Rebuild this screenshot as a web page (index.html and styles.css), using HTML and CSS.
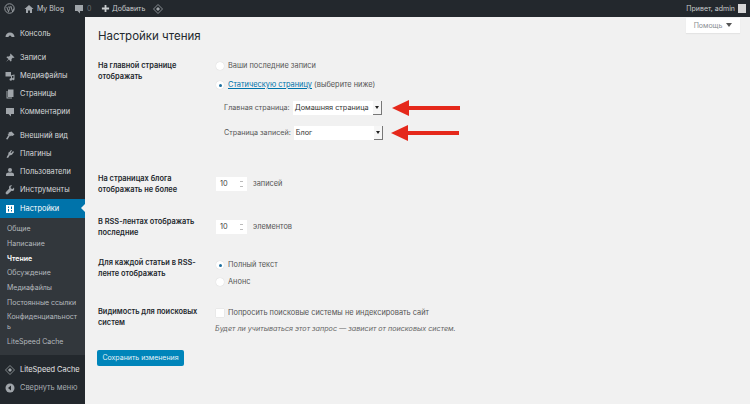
FILE: index.html
```html
<!DOCTYPE html>
<html lang="ru">
<head>
<meta charset="utf-8">
<title>Настройки чтения</title>
<link rel="stylesheet" href="styles.css">
</head>
<body>
<header class="topbar">
  <div class="bar-left">
    <svg class="ic wp" viewBox="0 0 20 20"><circle cx="10" cy="10" r="8.600" fill="none" stroke="#a0a5aa" stroke-width="1.600"/><path d="M5 7l3.200 9 2-6-1.200-3h-1m2 0h4m-1.200 0l2.800 9 2-6" fill="none" stroke="#a0a5aa" stroke-width="1.500"/></svg>
    <svg class="ic home" viewBox="0 0 20 20"><path d="M10 2L1 10h3v8h4v-5h4v5h4v-8h3z" fill="#a0a5aa"/></svg>
    <span class="bar-text blog">My Blog</span>
    <svg class="ic bubble" viewBox="0 0 20 20"><path d="M2 2h16v12h-6v5l-5-5H2z" fill="#a0a5aa"/></svg>
    <span class="bar-text zero">0</span>
    <svg class="ic plus" viewBox="0 0 20 20"><path d="M8 2h4v6h6v4h-6v6H8v-6H2V8h6z" fill="#c9ccce"/></svg>
    <span class="bar-text">Добавить</span>
    <svg class="ic ls" viewBox="0 0 20 20"><path d="M10 1l9 9-9 9-9-9z" fill="none" stroke="#a0a5aa" stroke-width="1.600"/><path d="M10 6l4 4-4 4-4-4z" fill="#a0a5aa"/></svg>
  </div>
  <div class="bar-right">
    <span class="bar-text">Привет, admin</span>
    <span class="avatar"></span>
  </div>
</header>
<div class="layout">
  <nav class="sidebar">
    <ul class="menu">
      <li class="item"><svg class="mi" viewBox="0 0 20 20"><path d="M1 16a9 9 0 1 1 18 0h-6a3 3 0 0 0-6 0z" fill="#a0a5aa"/></svg>Консоль</li>
      <li class="item sep"><svg class="mi" viewBox="0 0 20 20"><path d="M11 1l8 8-2 1-1-1-3 3 0 4-2 1-3-4-6 5 5-6-4-3 1-2h4l3-3-1-1z" fill="#a0a5aa"/></svg>Записи</li>
      <li class="item"><svg class="mi" viewBox="0 0 20 20"><path d="M1 2h11v9H1z" fill="#a0a5aa"/><path d="M14 8l5-1v9a2.500 2.500 0 1 1-2-2.400V9.500l-3 .6V17a2.500 2.500 0 1 1-2-2.400V9z" fill="#a0a5aa"/></svg>Медиафайлы</li>
      <li class="item"><svg class="mi" viewBox="0 0 20 20"><path d="M6 1h11v15H6z" fill="#a0a5aa"/><path d="M3 4h2v13h9v2H3z" fill="#a0a5aa"/></svg>Страницы</li>
      <li class="item"><svg class="mi" viewBox="0 0 20 20"><path d="M2 2h16v12h-6v5l-5-5H2z" fill="#a0a5aa"/></svg>Комментарии</li>
      <li class="item sep"><svg class="mi" viewBox="0 0 20 20"><path d="M13 1l6 6-4 3-2-1-1 2-2-2-5 8-3-1 5-8-2-2 3-1-1-2z" fill="#a0a5aa"/></svg>Внешний вид</li>
      <li class="item"><svg class="mi" viewBox="0 0 20 20"><path d="M12 2l2 1-3 4 2 1 3-4 2 2-3 4c-1 2-3 3-5 2l-4 6-3-1 4-7C6 8 7 6 9 6z" fill="#a0a5aa"/></svg>Плагины</li>
      <li class="item"><svg class="mi" viewBox="0 0 20 20"><circle cx="10" cy="6" r="4" fill="#a0a5aa"/><path d="M2 18v-3c0-3 3-4 8-4s8 1 8 4v3z" fill="#a0a5aa"/></svg>Пользователи</li>
      <li class="item"><svg class="mi" viewBox="0 0 20 20"><path d="M18 5l-3 3-3-1-1-3 3-3c-3-1-6 1-6 4l.5 2L2 14c-1 1-1 3 0 4s3 1 4 0l7-6.500 2 .5c3 0 4-3 3-7z" fill="#a0a5aa"/></svg>Инструменты</li>
      <li class="item current"><svg class="mi" viewBox="0 0 20 20"><path d="M2 2h16v16H2z" fill="#fff"/><path d="M6 5h2v3H6zm0 5h2v5H6zm6-5h2v5h-2zm0 7h2v3h-2z" fill="#0073aa"/></svg>Настройки</li>
      <li class="submenu">
        <a class="sub">Общие</a>
        <a class="sub">Написание</a>
        <a class="sub active">Чтение</a>
        <a class="sub">Обсуждение</a>
        <a class="sub">Медиафайлы</a>
        <a class="sub">Постоянные ссылки</a>
        <a class="sub">Конфиденциальност<br>ь</a>
        <a class="sub">LiteSpeed Cache</a>
      </li>
      <li class="item lsitem"><svg class="mi" viewBox="0 0 20 20"><path d="M10 1l9 9-9 9-9-9z" fill="none" stroke="#a0a5aa" stroke-width="1.500"/><path d="M10 6l4 4-4 4-4-4z" fill="#a0a5aa"/></svg>LiteSpeed Cache</li>
      <li class="item collapse"><svg class="mi" viewBox="0 0 20 20"><circle cx="10" cy="10" r="9" fill="#a0a5aa"/><path d="M12 5v10l-6-5z" fill="#23282d"/></svg>Свернуть меню</li>
    </ul>
  </nav>
  <main class="content">
    <div class="help-wrap"><button class="help">Помощь <span class="caret"></span></button></div>
    <h1 class="title">Настройки чтения</h1>
    <section class="row row-front">
      <div class="label">На главной странице отображать</div>
      <div class="field">
        <label class="line"><span class="radio"></span>Ваши последние записи</label>
        <label class="line"><span class="radio on"></span><span><a class="link">Статическую страницу</a> (выберите ниже)</span></label>
        <div class="pick pick-a">
          <span class="pick-label">Главная страница:</span>
          <span class="select"><span class="select-text">Домашняя страница</span><span class="select-btn"></span></span>
          <svg class="arrow" viewBox="0 0 68 16"><path d="M0 8L17 0v6h51v4H17V16z" fill="#e5281b"/></svg>
        </div>
        <div class="pick pick-b">
          <span class="pick-label">Страница записей:</span>
          <span class="select"><span class="select-text">Блог</span><span class="select-btn"></span></span>
          <svg class="arrow" viewBox="0 0 68 16"><path d="M0 8L17 0v6h51v4H17V16z" fill="#e5281b"/></svg>
        </div>
      </div>
    </section>
    <section class="row row-posts">
      <div class="label">На страницах блога отображать не более</div>
      <div class="field inline">
        <span class="number">10<span class="spin"></span></span>записей
      </div>
    </section>
    <section class="row row-rss">
      <div class="label">В RSS-лентах отображать последние</div>
      <div class="field inline">
        <span class="number">10<span class="spin"></span></span>элементов
      </div>
    </section>
    <section class="row row-each">
      <div class="label">Для каждой статьи в RSS-ленте отображать</div>
      <div class="field">
        <label class="line"><span class="radio on"></span>Полный текст</label>
        <label class="line"><span class="radio"></span>Анонс</label>
      </div>
    </section>
    <section class="row row-vis">
      <div class="label">Видимость для поисковых систем</div>
      <div class="field">
        <label class="line"><span class="check"></span>Попросить поисковые системы не индексировать сайт</label>
        <p class="desc">Будет ли учитываться этот запрос — зависит от поисковых систем.</p>
      </div>
    </section>
    <button class="save">Сохранить изменения</button>
  </main>
</div>
</body>
</html>
```
FILE: styles.css
```css
* { box-sizing: border-box; }
html, body { margin: 0; padding: 0; height: 100%; overflow: hidden; }
body { width: 750px; height: 404px; background: #f1f1f1; color: #444; font-family: Inter, "Liberation Sans", sans-serif; font-size: 7.400px; line-height: 10px; }
ul { list-style: none; margin: 0; padding: 0; }

.topbar { height: 17px; background: #23282d; color: #c5c8cb; display: flex; justify-content: space-between; align-items: center; }
.bar-left { display: flex; align-items: center; padding-left: 4px; }
.bar-right { display: flex; align-items: center; padding-right: 4px; }
.bar-text { font-size: 7px; color: #c9ccce; white-space: nowrap; }
.ic { width: 10px; height: 10px; flex: none; }
.wp { width: 11px; height: 11px; }
.home { margin-left: 9px; margin-right: 3px; }
.bubble { margin-left: 10px; margin-right: 3px; }
.zero { color: #6b7074; }
.plus { margin-left: 9.500px; margin-right: 2px; width: 9px; height: 9px; }
.ls { margin-left: 8px; }
.avatar { width: 8px; height: 9px; margin-left: 3px; background: #d5d5d5; }

.layout { display: flex; height: 387px; }
.sidebar { width: 85px; flex: none; background: #23282d; }
.menu { padding-top: 8px; }
.item { height: 18px; display: flex; align-items: center; padding-left: 5px; color: #d6d8da; font-size: 7.400px; white-space: nowrap; }
.mi { width: 10px; height: 10px; margin-right: 5px; flex: none; }
.sep { margin-top: 6px; }
.current { background: #0073aa; color: #fff; height: 19px; position: relative; }
.current::after { content: ""; position: absolute; right: 0; top: 5px; border: 4.500px solid transparent; border-right-color: #f1f1f1; border-left-width: 0; }
.submenu { background: #32373c; padding: 4px 0 5px; }
.sub { display: block; padding: 2.350px 6px 2.350px 7px; color: #b4b9be; font-size: 7px; line-height: 10px; white-space: nowrap; }
.active { color: #fff; font-weight: 600; }
.lsitem { margin-top: 6px; color: #e6e7e8; }
.collapse { color: #a9aeb3; }

.content { flex: 1; position: relative; padding: 12px 0 0 13px; }
.help-wrap { position: absolute; top: 1px; right: 10px; }
.help { display: block; width: 54px; height: 15px; border: 0; padding: 0; background: #fff; color: #8a8e92; font: 7px/15px Inter, "Liberation Sans", sans-serif; box-shadow: 0 1px 1px rgba(0,0,0,.05); }
.caret { display: inline-block; margin-left: 2px; border: 3px solid transparent; border-top: 4px solid #555; border-bottom: 0; vertical-align: 1px; }
.title { margin: 0 0 17px 0; font-size: 11.500px; font-weight: 400; line-height: 15px; color: #23282d; }

.row { display: flex; }
.label { width: 118px; flex: none; padding-right: 13px; font-size: 7.400px; font-weight: 600; line-height: 10.500px; color: #23282d; }
.field { color: #555; }
.line { display: flex; align-items: center; height: 10px; margin-bottom: 9px; white-space: nowrap; }
.link { color: #0073aa; text-decoration: underline; }
.radio { width: 8px; height: 8px; border-radius: 50%; background: #fff; margin: 0 4px 0 0; flex: none; position: relative; box-shadow: 0 0 1px rgba(0,0,0,.2); }
.on::after { content: ""; position: absolute; left: 2.500px; top: 2.500px; width: 3px; height: 3px; border-radius: 50%; background: #1e6f9f; }
.check { width: 8px; height: 8px; background: #fff; margin-right: 4px; flex: none; box-shadow: 0 0 1px rgba(0,0,0,.2); }

.pick { display: flex; align-items: center; padding-left: 8px; white-space: nowrap; height: 14px; }
.pick-a { margin-top: 11px; }
.pick-b { margin-top: 11px; }
.pick-label { margin-right: 3px; font-size: 7.200px; }
.select { width: 89px; height: 14px; background: #fff; display: flex; justify-content: space-between; font-size: 7.300px; line-height: 14px; color: #333; padding-left: 2px; flex: none; }
.select-text { white-space: nowrap; }
.select-btn { width: 9px; height: 14px; background: #f6f6f6; border-right: 1px solid #777; border-bottom: 1px solid #777; position: relative; flex: none; }
.select-btn::after { content: ""; position: absolute; left: 2px; top: 5px; border: 2px solid transparent; border-top: 3px solid #222; border-bottom: 0; }
.arrow { width: 68px; height: 16px; flex: none; margin-left: 10px; }
.pick-b .arrow { margin-left: 8px; }

.inline { display: flex; align-items: center; height: 14px; white-space: nowrap; margin-top: 3px; }
.number { width: 31px; height: 14px; background: #fff; padding-left: 4px; margin-right: 6px; line-height: 14px; position: relative; display: block; color: #444; }
.spin { position: absolute; right: 4px; top: 4px; width: 3px; height: 6px; border-top: 1px solid #bbb; border-bottom: 1px solid #bbb; }

.row-front { height: 110px; }
.row-posts { margin-top: 3px; height: 43px; }
.row-rss { height: 41px; }
.row-each { height: 50px; }
.row-each .field { padding-top: 2px; }
.row-each .line { margin-bottom: 7px; }
.row-vis { height: 40px; margin-top: -1px; }
.row-vis .field { padding-top: 1px; }
.row-vis .line { margin-bottom: 6px; }
.desc { margin: 0 0 0 -1px; font-style: italic; color: #666; font-size: 7.200px; white-space: nowrap; }
.save { display: block; width: 87px; height: 16px; margin: 3px 0 0 -1px; border: 0; border-radius: 2px; padding: 0; background: #0085ba; color: #e6f2f8; font: 7px/16px Inter, "Liberation Sans", sans-serif; }
```
